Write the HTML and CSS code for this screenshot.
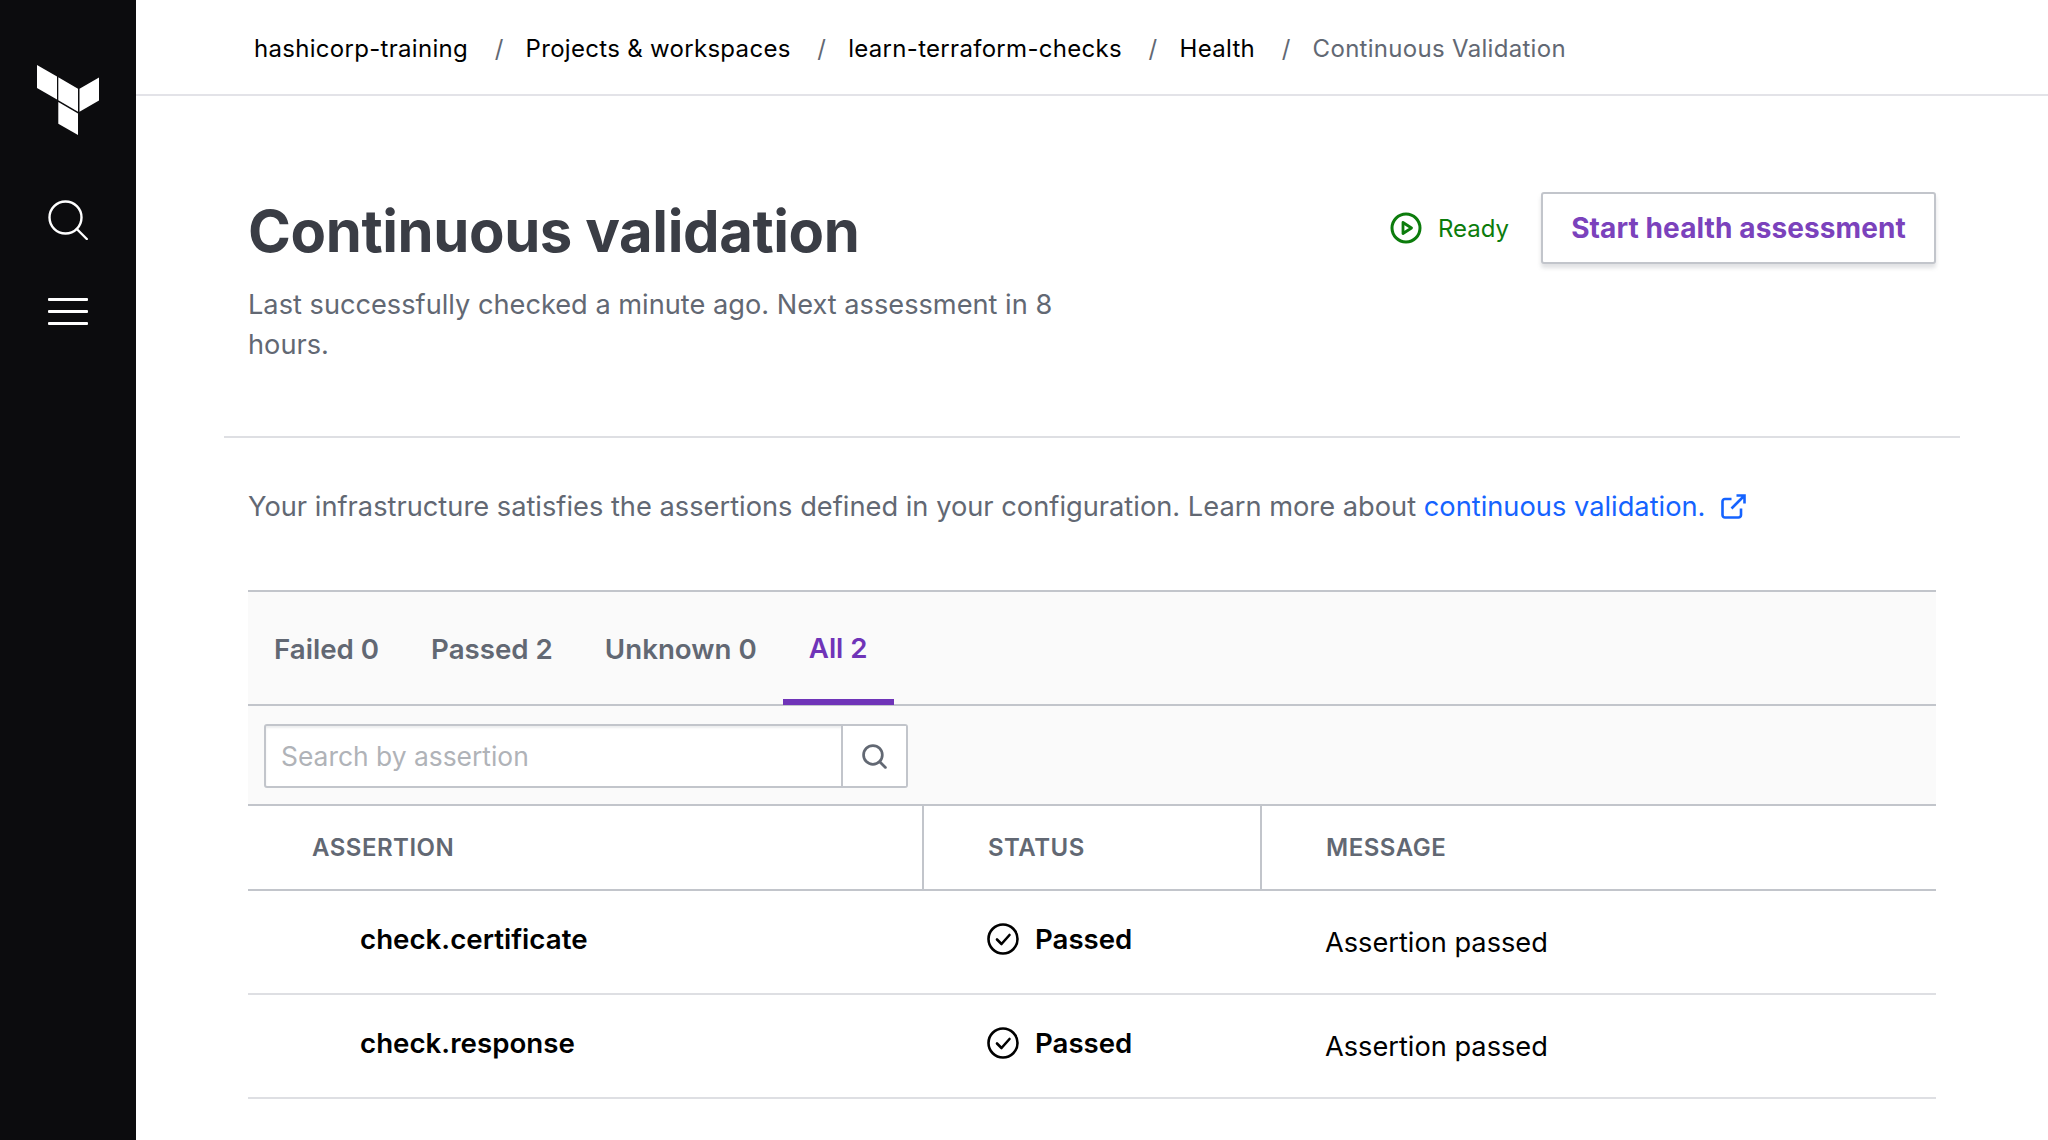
FILE: index.html
```html
<!DOCTYPE html>
<html lang="en">
<head>
<meta charset="utf-8">
<title>Continuous validation</title>
<link rel="stylesheet" href="styles.css">
</head>
<body>
<div class="app">
  <nav class="rail">
    <svg class="logo" viewBox="0 0 62 70" width="62" height="70"><path fill="#fff" d="M0 0l20 11.5v23L0 23zM21.300 12.300l19.700 11.400v23L21.300 35.300zM42.500 23.700L62 12.500v23L42.500 46.700zM21.300 37l19.700 11.400V70L21.300 58.700z"/></svg>
    <svg class="rail-search" viewBox="0 0 40 40" width="40" height="40"><circle cx="17.500" cy="17.500" r="16" fill="none" stroke="#fff" stroke-width="2.400"/><path d="M28.800 29l10 10" stroke="#fff" stroke-width="2.400" stroke-linecap="round"/></svg>
    <div class="burger"><span></span><span></span><span></span></div>
  </nav>
  <div class="main">
    <header class="crumbs">
      <a>hashicorp-training</a><i>/</i><a>Projects &amp; workspaces</a><i>/</i><a>learn-terraform-checks</a><i>/</i><a>Health</a><i>/</i><span>Continuous Validation</span>
    </header>
    <section class="head">
      <div class="head-text">
        <h1>Continuous validation</h1>
        <p>Last successfully checked a minute ago. Next assessment in 8 hours.</p>
      </div>
      <div class="actions">
        <span class="ready">
          <svg viewBox="0 0 32 32" width="32" height="32"><circle cx="16" cy="16" r="14" fill="none" stroke="#0c7c0c" stroke-width="3"/><path d="M13 10.500l8.500 5.500-8.500 5.500z" fill="none" stroke="#0c7c0c" stroke-width="2.800" stroke-linejoin="round"/></svg>
          Ready
        </span>
        <button class="start">Start health assessment</button>
      </div>
    </section>
    <hr class="rule">
    <p class="intro">Your infrastructure satisfies the assertions defined in your configuration. Learn more about <a>continuous validation.</a><svg viewBox="0 0 26 26" width="26" height="26"><path d="M21 14.500V21a2.500 2.500 0 0 1-2.500 2.500H5A2.500 2.500 0 0 1 2.500 21V7.500A2.500 2.500 0 0 1 5 5h6.500M16.500 1.500h8v8M24.500 1.500L11.500 14.500" fill="none" stroke="#1563ff" stroke-width="2.600"/></svg></p>
    <section class="panel">
      <div class="tabs">
        <a>Failed 0</a><a>Passed 2</a><a>Unknown 0</a><a class="on">All 2</a>
      </div>
      <div class="filter">
        <div class="searchbox">
          <span class="ph">Search by assertion</span>
          <span class="go"><svg viewBox="0 0 24 24" width="25" height="25"><circle cx="10.500" cy="10.500" r="9" fill="none" stroke="#626873" stroke-width="2.600"/><path d="M17 17l5.500 5.500" stroke="#626873" stroke-width="2.600" stroke-linecap="round"/></svg></span>
        </div>
      </div>
      <div class="table">
        <div class="thead">
          <div>ASSERTION</div><div>STATUS</div><div>MESSAGE</div>
        </div>
        <div class="row">
          <div class="name">check.certificate</div>
          <div class="status"><svg viewBox="0 0 32 32" width="32" height="32"><circle cx="16" cy="16" r="14.500" fill="none" stroke="#000" stroke-width="2.600"/><path d="M10 16.500l4.500 4.500 8-9" fill="none" stroke="#000" stroke-width="2.600" stroke-linecap="round" stroke-linejoin="round"/></svg>Passed</div>
          <div class="msg">Assertion passed</div>
        </div>
        <div class="row">
          <div class="name">check.response</div>
          <div class="status"><svg viewBox="0 0 32 32" width="32" height="32"><circle cx="16" cy="16" r="14.500" fill="none" stroke="#000" stroke-width="2.600"/><path d="M10 16.500l4.500 4.500 8-9" fill="none" stroke="#000" stroke-width="2.600" stroke-linecap="round" stroke-linejoin="round"/></svg>Passed</div>
          <div class="msg">Assertion passed</div>
        </div>
      </div>
    </section>
  </div>
</div>
</body>
</html>
```

FILE: styles.css
```css
* { box-sizing: border-box; }
html, body { margin: 0; height: 100%; overflow: hidden; background: #fff; }
body { font-family: Inter, "Liberation Sans", sans-serif; color: #000; }
.app { display: flex; height: 1140px; }
.rail { width: 136px; flex: none; background: #0c0c0e; display: flex; flex-direction: column; align-items: center; }
.logo { margin-top: 65px; }
.rail-search { margin-top: 65px; }
.burger { margin-top: 58px; width: 40px; display: flex; flex-direction: column; gap: 9px; }
.burger span { display: block; height: 3px; background: #fff; border-radius: 1px; }
.main { flex: 1; min-width: 0; }
.crumbs { height: 96px; border-bottom: 2px solid #e3e3e8; display: flex; align-items: center; padding-left: 118px; padding-top: 2px; font-size: 24px; letter-spacing: .3px; }
.crumbs i { font-style: normal; color: #626873; margin: 0 22px 0 26.600px; }
.crumbs span { color: #626873; }
.head { display: flex; justify-content: space-between; padding: 96px 112px 0 112px; height: 340px; }
.head-text { width: 830px; }
h1 { margin: 4px 0 0; font-size: 58px; line-height: 70px; font-weight: 700; color: #3a3d45; letter-spacing: -0.4px; }
.head-text p { margin: 19px 0 0; font-size: 27.2px; line-height: 40px; color: #626873; }
.actions { display: flex; align-items: flex-start; gap: 32px; }
.ready { display: flex; align-items: center; gap: 16px; height: 72px; color: #0c7c0c; font-size: 24px; }
.start { width: 395px; height: 72px; background: #fff; border: 2px solid #c2c5cb; border-radius: 3px; box-shadow: 0 4px 4px rgba(98,104,115,.2); color: #7b42bc; font: 700 28px Inter, "Liberation Sans", sans-serif; letter-spacing: .1px; padding: 0; }
.rule { margin: 0 88px; border: 0; border-top: 2px solid #dedfe3; }
.intro { margin: 49px 88px 0 112px; height: 40px; font-size: 27.26px; line-height: 40px; color: #626873; display: flex; align-items: center; white-space: pre-wrap; }
.intro a { color: #1563ff; }
.intro svg { margin-left: 15px; }
.panel { margin: 63px 112px 0 112px; }
.tabs { height: 116px; background: #fafafa; border-top: 2px solid #c2c5cb; border-bottom: 2px solid #c2c5cb; display: flex; font-size: 27.7px; font-weight: 600; color: #626873; }
.tabs a { display: flex; align-items: center; padding: 0 26px; height: 113px; }
.tabs a.on { color: #6f34b8; border-bottom: 6px solid #6f34b8; padding-top: 5px; }
.filter { height: 98px; background: #fafafa; padding: 18px 16px 0; }
.searchbox { width: 644px; height: 64px; background: #fff; border: 2px solid #c2c5cb; border-radius: 3px; display: flex; box-shadow: inset 0 2px 2px rgba(98,104,115,.12); }
.ph { flex: 1; font-size: 26.4px; line-height: 60px; padding-left: 15px; color: #b0b3b8; }
.go { width: 65px; border-left: 2px solid #c2c5cb; display: flex; align-items: center; justify-content: center; background: #fff; }
.thead { display: grid; grid-template-columns: 676px 338px 1fr; height: 87px; border-top: 2px solid #c2c5cb; border-bottom: 2px solid #c2c5cb; font-size: 24px; font-weight: 600; color: #626873; letter-spacing: .5px; }
.thead div { display: flex; align-items: center; padding-left: 64px; border-right: 2px solid #c2c5cb; }
.thead div:last-child { border-right: 0; }
.row { display: grid; grid-template-columns: 676px 338px 1fr; height: 104px; border-bottom: 2px solid #dedfe3; align-items: center; }
.name { padding-left: 112px; font-size: 27.7px; font-weight: 600; margin-top: -6px; }
.status { padding-left: 63px; font-size: 27.6px; font-weight: 600; display: flex; align-items: center; gap: 16px; margin-top: -6px; }
.msg { padding-left: 63px; font-size: 27.2px; }
```
